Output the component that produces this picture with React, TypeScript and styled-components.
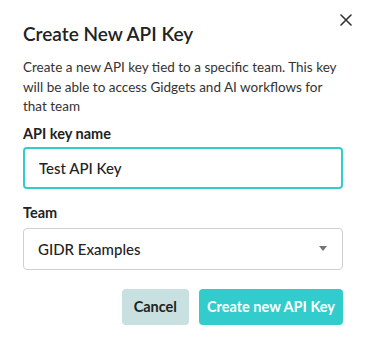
import styled, { createGlobalStyle } from 'styled-components';

const GlobalStyle = createGlobalStyle`
  html, body {
    margin: 0;
    padding: 0;
    background: #ffffff;
  }
  * {
    box-sizing: border-box;
  }
`;

const Dialog = styled.div`
  position: relative;
  width: 366px;
  height: 345px;
  padding: 22px 23px 0 23px;
  font-family: Lato, 'Noto Sans', sans-serif;
  color: #222222;
  background: #ffffff;
`;

const CloseButton = styled.button`
  position: absolute;
  top: 12px;
  right: 12px;
  width: 16px;
  height: 16px;
  padding: 0;
  border: none;
  background: transparent;
  display: flex;
  align-items: center;
  justify-content: center;
  cursor: pointer;
`;

const Title = styled.h2`
  margin: 0;
  font-size: 19px;
  font-weight: 600;
  line-height: 24px;
  color: #222222;
`;

const Description = styled.p`
  margin: 12px 0 0;
  font-size: 13.5px;
  line-height: 19.5px;
  color: #333333;
`;

const Field = styled.div<{ $gap?: number }>`
  display: flex;
  flex-direction: column;
  gap: 4px;
  margin-top: ${({ $gap }) => $gap ?? 0}px;
`;

const Label = styled.label`
  font-size: 14.5px;
  font-weight: 700;
  line-height: 18px;
  color: #222222;
`;

const TextInput = styled.input`
  width: 100%;
  height: 42px;
  padding: 0 14px;
  border: 2px solid #33cccc;
  border-radius: 4px;
  font-family: inherit;
  font-size: 15px;
  font-weight: 500;
  color: #222222;
  outline: none;
`;

const Select = styled.div`
  display: flex;
  align-items: center;
  justify-content: space-between;
  width: 100%;
  height: 42px;
  margin-top: 2px;
  padding: 0 15px 0 14px;
  border: 1px solid #cfcfcf;
  border-radius: 4px;
  font-size: 15px;
  font-weight: 500;
  color: #222222;
`;

const Caret = styled.span`
  width: 0;
  height: 0;
  border-left: 4px solid transparent;
  border-right: 4px solid transparent;
  border-top: 5px solid #757575;
`;

const Actions = styled.div`
  display: flex;
  justify-content: flex-end;
  gap: 10px;
  margin-top: 19px;
`;

const Button = styled.button<{ $primary?: boolean }>`
  height: 36px;
  padding: 0 ${({ $primary }) => ($primary ? 8 : 12)}px;
  border: none;
  border-radius: 4px;
  font-family: inherit;
  font-size: 14.5px;
  font-weight: 700;
  background: ${({ $primary }) => ($primary ? '#33cccc' : '#c8e0e0')};
  color: ${({ $primary }) => ($primary ? '#ffffff' : '#222222')};
  cursor: pointer;
`;

export default function App() {
  return (
    <>
      <GlobalStyle />
      <Dialog>
        <CloseButton aria-label="Close">
          <svg width="12" height="12" viewBox="0 0 12 12">
            <path d="M1 1 L11 11 M11 1 L1 11" stroke="#333" strokeWidth="1.6" strokeLinecap="round" />
          </svg>
        </CloseButton>
        <Title>Create New API Key</Title>
        <Description>
          Create a new API key tied to a specific team. This key will be able to access Gidgets and AI workflows for
          that team
        </Description>
        <Field $gap={8}>
          <Label>API key name</Label>
          <TextInput defaultValue="Test API Key" />
        </Field>
        <Field $gap={15}>
          <Label>Team</Label>
          <Select>
            <span>GIDR Examples</span>
            <Caret />
          </Select>
        </Field>
        <Actions>
          <Button>Cancel</Button>
          <Button $primary>Create new API Key</Button>
        </Actions>
      </Dialog>
    </>
  );
}
